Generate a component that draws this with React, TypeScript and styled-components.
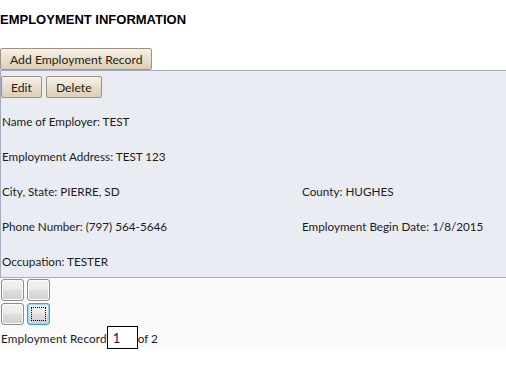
import React from 'react'
import styled, { createGlobalStyle } from 'styled-components'

const GlobalStyle = createGlobalStyle`
    html, body {
        margin: 0;
        padding: 0;
        background: #ffffff;
    }
    body {
        font-family: "Lato", "Open Sans", sans-serif;
        font-size: 11.7px;
        color: #1c1c1c;
    }
`

const Page = styled.div`
    width: 506px;
`

const Heading = styled.h4`
    margin: 0;
    padding: 12px 0 0 0;
    font-family: "Liberation Sans", Arial, sans-serif;
    font-size: 13px;
    font-weight: bold;
    line-height: 15px;
    color: #000;
`

const Toolbar = styled.div`
    display: flex;
    gap: 4px;
    padding: ${(p: { $pad?: string }) => p.$pad || '0'};
`

const ActionButton = styled.button`
    height: 22px;
    padding: 0 9px;
    font-family: "Lato", "Open Sans", sans-serif;
    font-size: 12.2px;
    color: #2a1c0c;
    background: linear-gradient(#f6f2ea, #e6dccb 55%, #dccfb9);
    border: 1px solid #a0927e;
    border-radius: 2px;
    cursor: pointer;
`

const RecordPanel = styled.section`
    background: #e9ecf2;
    border: 1px solid #a3acc0;
    border-right: none;
`

const Fields = styled.div`
    display: grid;
    grid-template-columns: 300px 1fr;
    row-gap: 19px;
    padding: 15px 0 8px 1px;
    line-height: 16px;
`

const Field = styled.div<{ $wide?: boolean }>`
    grid-column: ${(p) => (p.$wide ? '1 / span 2' : 'auto')};
    white-space: nowrap;
`

const Pager = styled.div`
    background: #fafafa;
    padding: 1px 0 0 1px;
`

const NavGrid = styled.div`
    display: grid;
    grid-template-columns: 23px 23px;
    gap: 2px 3px;
`

const NavButton = styled.button<{ $focused?: boolean }>`
    width: 23px;
    height: 22px;
    padding: 0;
    border: 1px solid ${(p) => (p.$focused ? '#3a9fdb' : '#8c8c8c')};
    border-radius: 3px;
    background: linear-gradient(#f2f2f2 0%, #ebebeb 45%, #dcdcdc 55%, #d0d0d0 100%);
    box-shadow: ${(p) => (p.$focused ? 'inset 0 0 0 1px #9fd3f3' : 'inset 0 0 0 1px #fcfcfc')};
    position: relative;
    &::after {
        content: '';
        display: ${(p) => (p.$focused ? 'block' : 'none')};
        position: absolute;
        inset: 3px;
        border: 1px dotted #000;
    }
`

const RecordLine = styled.div`
    display: flex;
    align-items: center;
    height: 23px;
    margin-top: 1px;
`

const RecordLabel = styled.span`
    letter-spacing: 0.15px;
`

const RecordInput = styled.input`
    box-sizing: border-box;
    width: 31px;
    height: 23px;
    margin: 0;
    padding: 0 0 0 5px;
    border: 1px solid #000;
    background: #fff;
    font-family: "Lato", "Open Sans", sans-serif;
    font-size: 13px;
    color: #1a1a3a;
    outline: none;
`

export default function App() {
    const left = [
        'Name of Employer: TEST',
        'Employment Address: TEST 123',
    ]
    return (
        <Page>
            <GlobalStyle />
            <Heading>EMPLOYMENT INFORMATION</Heading>
            <Toolbar $pad="21px 0 0 0">
                <ActionButton>Add Employment Record</ActionButton>
            </Toolbar>
            <RecordPanel>
                <Toolbar $pad="5px 0 0 0">
                    <ActionButton>Edit</ActionButton>
                    <ActionButton>Delete</ActionButton>
                </Toolbar>
                <Fields>
                    {left.map((t) => (
                        <Field key={t} $wide>{t}</Field>
                    ))}
                    <Field>City, State: PIERRE, SD</Field>
                    <Field>County: HUGHES</Field>
                    <Field>Phone Number: (797) 564-5646</Field>
                    <Field>Employment Begin Date: 1/8/2015</Field>
                    <Field $wide>Occupation: TESTER</Field>
                </Fields>
            </RecordPanel>
            <Pager>
                <NavGrid>
                    <NavButton aria-label="first" />
                    <NavButton aria-label="previous" />
                    <NavButton aria-label="next" />
                    <NavButton aria-label="last" $focused />
                </NavGrid>
                <RecordLine>
                    <RecordLabel>Employment Record</RecordLabel>
                    <RecordInput defaultValue="1" />
                    of 2
                </RecordLine>
            </Pager>
        </Page>
    )
}
